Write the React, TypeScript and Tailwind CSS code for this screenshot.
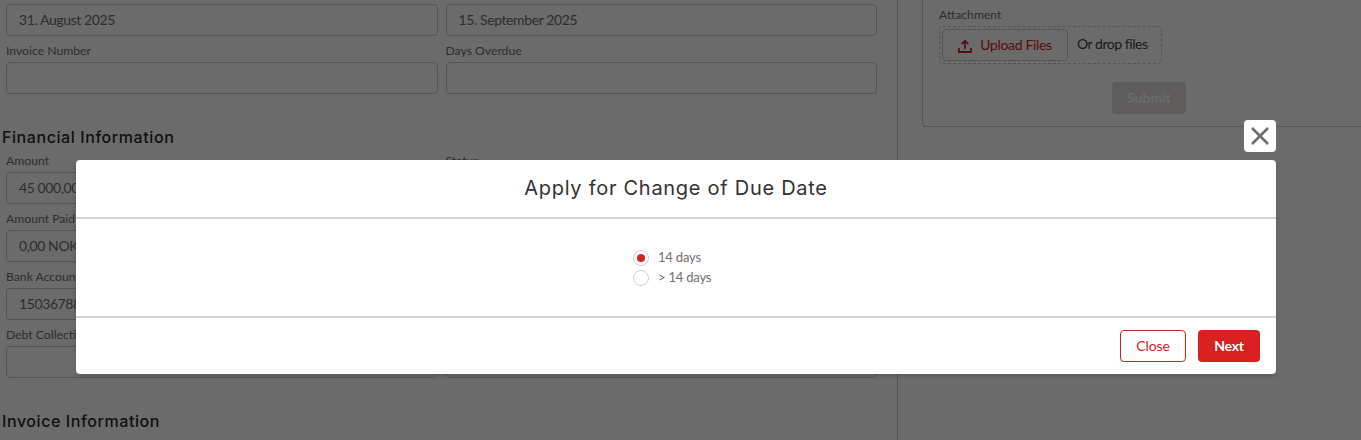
import React from "react";

const body = "font-['Lato','Liberation_Sans',sans-serif]";
const display = "font-['Inter','Liberation_Sans',sans-serif]";

function Input({ value }: { value?: string }) {
  return (
    <div className="h-[32px] rounded-[4px] border border-[#c9c9c9] pl-[12px] text-[14px] leading-[30px] tracking-[-0.4px] text-[#706e6b] overflow-hidden whitespace-nowrap">
      {value}
    </div>
  );
}

function Field({ label, value }: { label: string; value?: string }) {
  return (
    <div className="flex flex-col">
      <div className="h-[26px] pt-[7px] text-[12.2px] leading-[16px] text-[#706e6b]">{label}</div>
      <Input value={value} />
    </div>
  );
}

function Heading({ children }: { children: React.ReactNode }) {
  return (
    <h2 className={`${display} h-[52px] pt-[34px] -ml-[4px] text-[16px] leading-[18px] font-medium tracking-[0.58px] text-[#2b2826]`}>
      {children}
    </h2>
  );
}

function Radio({ label, checked }: { label: string; checked?: boolean }) {
  return (
    <label className="flex h-[20px] items-center gap-[9px] text-[13px] tracking-[-0.2px] text-[#6f6f6f]">
      <span className="flex h-[16px] w-[16px] items-center justify-center rounded-full border border-[#cfcfcf] bg-white">
        {checked && <span className="h-[8px] w-[8px] rounded-full bg-[#d92121]" />}
      </span>
      {label}
    </label>
  );
}

export default function App() {
  return (
    <div className={`${body} relative h-[440px] w-full overflow-hidden bg-white`}>
      <div className="flex h-full">
        <main className="h-full w-[898px] shrink-0 border-r border-[#c9c9c9] pl-[6px] pr-[20px] pt-[4px]">
          <div className="grid grid-cols-2 gap-x-[8px]">
            <Input value="31. August 2025" />
            <Input value="15. September 2025" />
            <Field label="Invoice Number" />
            <Field label="Days Overdue" />
          </div>
          <Heading>Financial Information</Heading>
          <div className="grid grid-cols-2 gap-x-[8px]">
            <Field label="Amount" value="45 000,00 NOK" />
            <Field label="Status" />
            <Field label="Amount Paid" value="0,00 NOK" />
            <Field label="Due Date" />
            <Field label="Bank Account" value="15036788000" />
            <Field label="KID" />
            <Field label="Debt Collection" />
            <Field label="Reference" />
          </div>
          <Heading>Invoice Information</Heading>
        </main>
        <aside className="ml-[24px] h-[127px] flex-1 rounded-bl-[4px] border-b border-l border-[#c9c9c9] pl-[16px]">
          <div className="pt-[7px] text-[12.2px] leading-[16px] text-[#706e6b]">Attachment</div>
          <div className="mt-[3px] flex h-[38px] w-[223px] items-center rounded-[4px] border border-dashed border-[#c9c9c9] pl-[2px]">
            <button className="flex h-[32px] w-[126px] items-center justify-center gap-[8px] rounded-[4px] border border-[#c9c9c9] pb-[1px] text-[14px] tracking-[-0.35px] text-[#d92121]">
              <svg width="14" height="14" viewBox="0 0 14 14" fill="none" stroke="currentColor" strokeWidth="1.8" className="mt-[2px]">
                <path d="M7 10V2M3.6 5.2 7 1.8 10.4 5.2" />
                <path d="M1 9V13H13V9" />
              </svg>
              Upload Files
            </button>
            <span className="ml-[9px] pb-[3px] text-[14px] tracking-[-0.45px] text-[#3e3e3c]">Or drop files</span>
          </div>
          <button className="ml-[173px] mt-[18px] h-[32px] w-[74px] rounded-[4px] bg-[#e0dedc] pb-[2px] text-[14px] font-bold text-white">
            Submit
          </button>
        </aside>
      </div>

      <div className="absolute inset-0 bg-black/58" />

      <button className="absolute left-[1244px] top-[120px] flex h-[32px] w-[32px] items-center justify-center rounded-[4px] bg-white text-[#706e6b]">
        <svg width="18" height="18" viewBox="0 0 18 18" fill="none" stroke="currentColor" strokeWidth="2.6">
          <path d="M1 1 17 17M17 1 1 17" />
        </svg>
      </button>

      <div className="absolute left-[76px] top-[160px] flex h-[214px] w-[1200px] flex-col rounded-[4px] bg-white shadow-[0_2px_4px_rgba(0,0,0,0.16)]">
        <div className={`${display} flex h-[59px] shrink-0 items-center justify-center border-b-2 border-[#d4d4d4] pb-[2px] text-[20px] tracking-[0.72px] text-[#333333]`}>
          Apply for Change of Due Date
        </div>
        <div className="flex h-[99px] shrink-0 flex-col items-start justify-center border-b-2 border-[#d4d4d4] pl-[557px] pt-[1px]">
          <Radio label="14 days" checked />
          <Radio label="> 14 days" />
        </div>
        <div className="flex flex-1 items-start justify-end gap-[12px] pr-[16px] pt-[12px]">
          <button className="h-[32px] w-[66px] rounded-[4px] border border-[#d92121] bg-white pb-[1px] text-[14px] tracking-[-0.1px] text-[#d92121]">Close</button>
          <button className="h-[32px] w-[62px] rounded-[4px] bg-[#d92121] pb-[1px] text-[14px] font-bold tracking-[-0.2px] text-white">Next</button>
        </div>
      </div>
    </div>
  );
}
